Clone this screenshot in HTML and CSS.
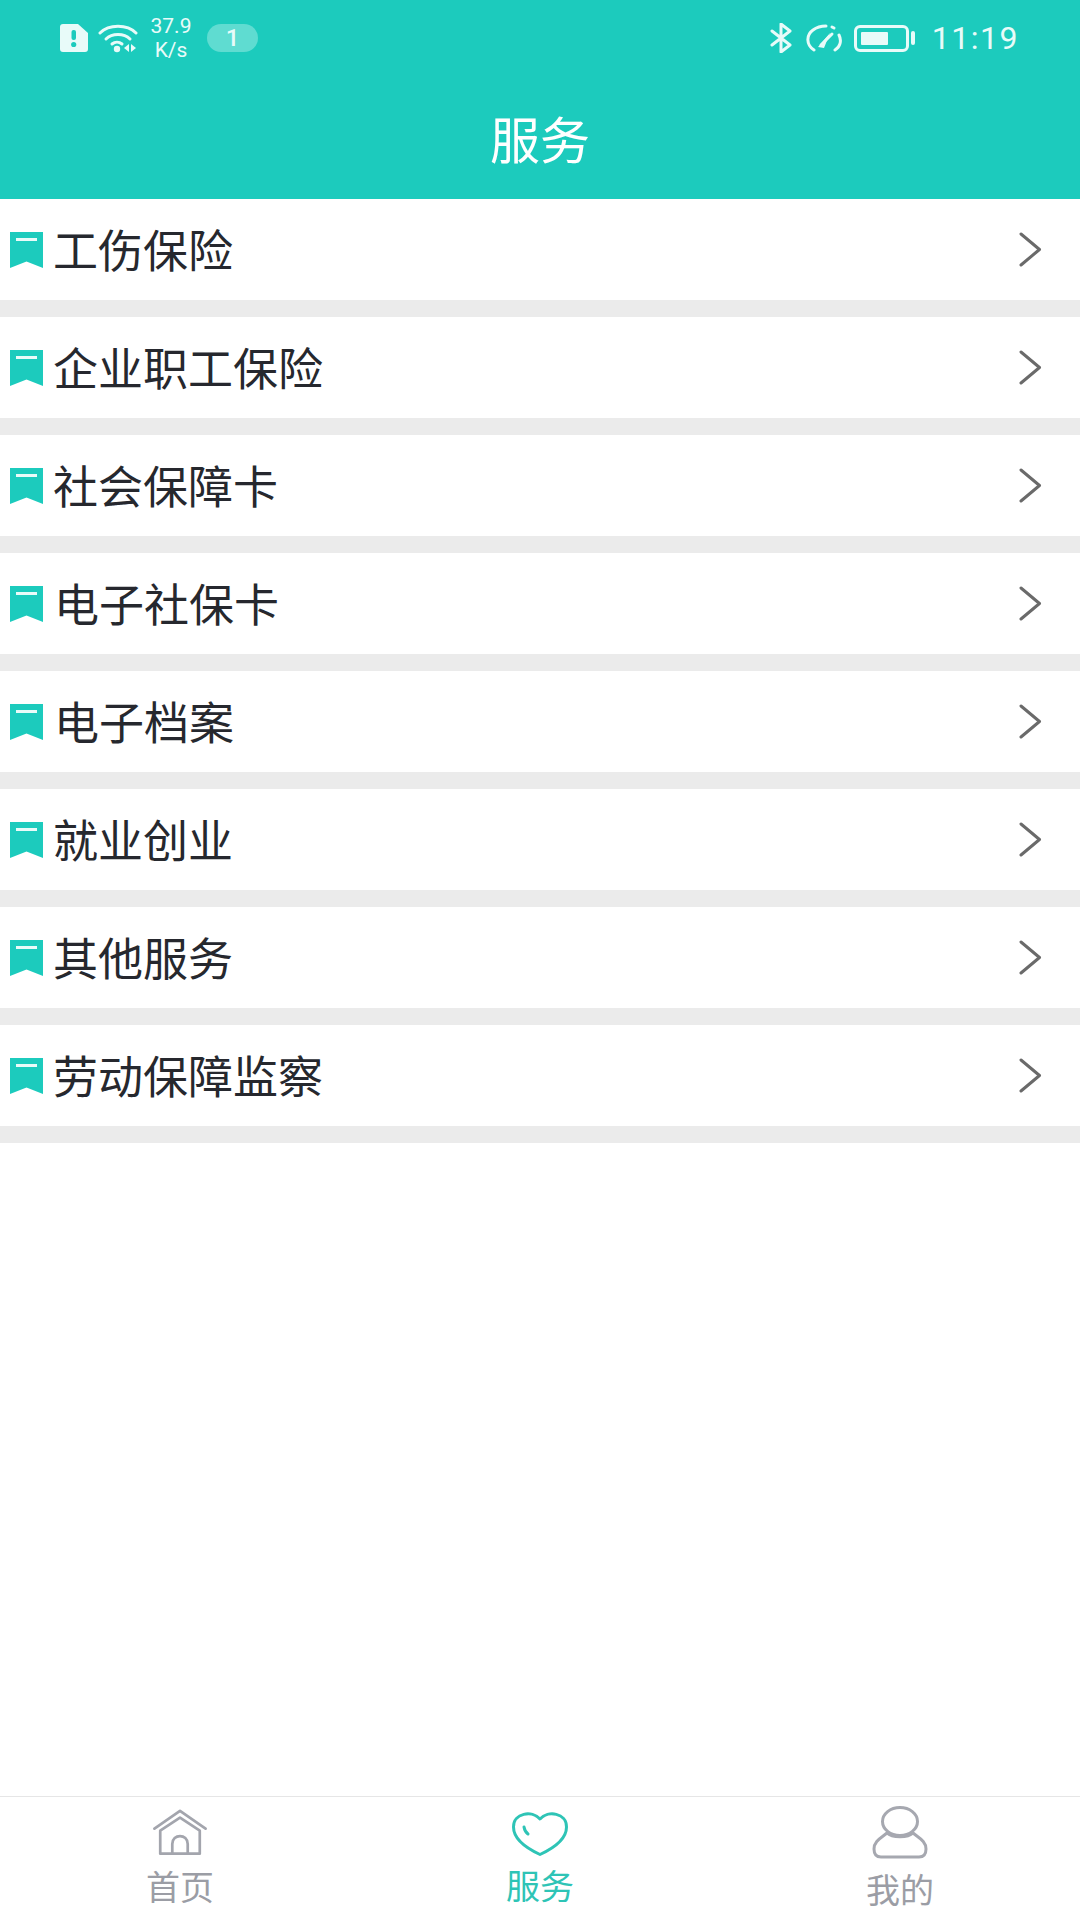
FILE: index.html
```html
<!DOCTYPE html>
<html>
<head>
<meta charset="utf-8">
<title>服务</title>
<link rel="stylesheet" href="styles.css">
</head>
<body>
<svg class="defs" width="0" height="0">
    <symbol id="flag" viewBox="0 0 33 36">
        <path d="M0 0H33V36L16.5 29.5L0 36Z" fill="#1ccbbd"/>
        <rect x="6" y="6" width="21" height="3" fill="#e9fbf9"/>
    </symbol>
    <symbol id="arrow" viewBox="0 0 23 35">
        <path d="M2 2L20.5 17.5L2 33" fill="none" stroke="#6a6a6a" stroke-width="3" stroke-linecap="round" stroke-linejoin="round"/>
    </symbol>
</svg>
<div class="page">
    <header class="head">
        <div class="status">
            <div class="status-left">
                <svg class="ic-sim" width="28" height="28" viewBox="0 0 28 28">
                    <path d="M3 0H18L28 9V25a3 3 0 0 1-3 3H3a3 3 0 0 1-3-3V3a3 3 0 0 1 3-3Z" fill="#e8fbf9"/>
                    <rect x="11.5" y="6" width="4.5" height="10" rx="2" fill="#1ccbbd"/>
                    <circle cx="13.7" cy="20.5" r="2.6" fill="#1ccbbd"/>
                </svg>
                <svg class="ic-wifi" width="40" height="30" viewBox="0 0 40 30">
                    <g fill="none" stroke="#e8fbf9" stroke-width="3" stroke-linecap="round">
                        <path d="M2 10C11 1 29 1 38 10"/>
                        <path d="M8 16C14 10 26 10 32 16"/>
                        <path d="M14 21C17 18.500 21 18.500 24 21"/>
                    </g>
                    <circle cx="19" cy="26" r="3.200" fill="#e8fbf9"/>
                    <path d="M31 21V29L26 25Z M33 21V29L38 25Z" fill="#e8fbf9"/>
                </svg>
                <div class="speed">37.9<br>K/s</div>
                <div class="badge">1</div>
            </div>
            <div class="status-right">
                <svg class="ic-bt" width="23" height="30" viewBox="0 0 23 30">
                    <path d="M2 8L20 22L11 29V1L20 8L2 22" fill="none" stroke="#e8fbf9" stroke-width="3" stroke-linecap="round" stroke-linejoin="round"/>
                </svg>
                <svg class="ic-gauge" width="36" height="28" viewBox="0 0 36 28">
                    <g fill="none" stroke="#e8fbf9" stroke-width="3" stroke-linecap="round">
                        <path d="M8 26C0 21 0 11 7 6C11 3 15 2 20 2"/>
                        <path d="M26 3L28 4"/>
                        <path d="M33 11C36 17 34 23 29 26"/>
                        <path d="M15 21L26 10"/>
                    </g>
                    <path d="M12 23L24 9L18 24Z" fill="#e8fbf9"/>
                </svg>
                <div class="battery"><div class="battery-fill"></div></div>
                <div class="battery-cap"></div>
                <div class="time">11:19</div>
            </div>
        </div>
        <h1>服务</h1>
    </header>
    <ul class="list">
        <li><svg class="flag"><use href="#flag"/></svg><span>工伤保险</span><svg class="arrow"><use href="#arrow"/></svg></li>
        <li><svg class="flag"><use href="#flag"/></svg><span>企业职工保险</span><svg class="arrow"><use href="#arrow"/></svg></li>
        <li><svg class="flag"><use href="#flag"/></svg><span>社会保障卡</span><svg class="arrow"><use href="#arrow"/></svg></li>
        <li><svg class="flag"><use href="#flag"/></svg><span class="shift">电子社保卡</span><svg class="arrow"><use href="#arrow"/></svg></li>
        <li><svg class="flag"><use href="#flag"/></svg><span class="shift">电子档案</span><svg class="arrow"><use href="#arrow"/></svg></li>
        <li><svg class="flag"><use href="#flag"/></svg><span>就业创业</span><svg class="arrow"><use href="#arrow"/></svg></li>
        <li><svg class="flag"><use href="#flag"/></svg><span>其他服务</span><svg class="arrow"><use href="#arrow"/></svg></li>
        <li><svg class="flag"><use href="#flag"/></svg><span>劳动保障监察</span><svg class="arrow"><use href="#arrow"/></svg></li>
    </ul>
    <nav class="tabs">
        <div class="tab tab-home">
            <svg width="54" height="47" viewBox="0 0 56 48">
                <g fill="none" stroke="#a3a5ad" stroke-width="2.800" stroke-linejoin="round" stroke-linecap="round">
                    <path d="M1.500 20L28 1.500L54.500 20"/>
                    <path d="M7.500 22L28 8.500L48.500 22V46H7.500Z"/>
                    <path d="M20 46V36C20 25 36 25 36 36V46"/>
                </g>
            </svg>
            <span>首页</span>
        </div>
        <div class="tab tab-service">
            <svg width="56" height="44" viewBox="0 0 56 44">
                <g fill="none" stroke="#2ec4b6" stroke-width="3" stroke-linecap="round" stroke-linejoin="round">
                    <path d="M28 42.500C14 36 1.500 27 1.500 15C1.500 1 20 -2 28 7C36 -2 54.500 1 54.500 15C54.500 27 42 36 28 42.500Z"/>
                    <path d="M12 15C12.500 18 14 20.500 16 22"/>
                </g>
            </svg>
            <span>服务</span>
        </div>
        <div class="tab tab-me">
            <svg width="56" height="53" viewBox="0 0 56 53">
                <g fill="none" stroke="#a6a8b0" stroke-width="3" stroke-linejoin="round">
                    <ellipse cx="28" cy="15.500" rx="17.500" ry="14"/>
                    <path d="M15 27C9 32 2 35 2 43C2 48 4 51 9 51H47C52 51 54 48 54 43C54 35 47 32 41 27C36 32 20 32 15 27Z"/>
                </g>
            </svg>
            <span>我的</span>
        </div>
    </nav>
</div>
</body>
</html>
```

FILE: styles.css
```css
body {
    margin: 0;
    font-family: "Noto Sans CJK SC", "Liberation Sans", sans-serif;
    background-color: #fff;
}
.defs {
    display: block;
    height: 0;
}
.page {
    width: 1080px;
    height: 1920px;
    display: flex;
    flex-direction: column;
}
.head {
    height: 199px;
    background-color: #1ccbbd;
    color: #fff;
}
.status {
    height: 76px;
    display: flex;
    justify-content: space-between;
    align-items: center;
    font-family: Roboto, "Liberation Sans", sans-serif;
    color: #e8fbf9;
}
.status-left {
    display: flex;
    align-items: center;
    padding-left: 60px;
}
.ic-wifi {
    margin-left: 10px;
}
.speed {
    width: 50px;
    margin-left: 8px;
    font-size: 21px;
    line-height: 24px;
    text-align: center;
}
.badge {
    width: 51px;
    height: 28px;
    margin-left: 11px;
    border-radius: 14px;
    background-color: #5fdcd1;
    font-size: 24px;
    font-weight: 500;
    line-height: 28px;
    text-align: center;
}
.status-right {
    display: flex;
    align-items: center;
    padding-right: 61px;
}
.ic-gauge {
    margin-left: 13px;
}
.battery {
    width: 55px;
    height: 27px;
    margin-left: 12px;
    padding: 4px;
    box-sizing: border-box;
    border: 3px solid #e8fbf9;
    border-radius: 6px;
}
.battery-fill {
    width: 27px;
    height: 100%;
    background-color: #e8fbf9;
    border-radius: 1px;
}
.battery-cap {
    width: 4px;
    height: 14px;
    margin-left: 2px;
    background-color: #e8fbf9;
    border-radius: 2px;
}
.time {
    margin-left: 17px;
    font-size: 32px;
    letter-spacing: 1.500px;
}
h1 {
    margin: 0;
    height: 123px;
    font-size: 50px;
    font-weight: 400;
    line-height: 122px;
    text-align: center;
}
.list {
    list-style: none;
    margin: 0;
    padding: 0;
    flex: 1;
}
.list li {
    height: 101px;
    display: flex;
    align-items: center;
    padding: 0 38px 0 10px;
    border-bottom: 17px solid #ebebeb;
    font-size: 45px;
    color: #26282e;
}
.list span {
    margin-left: -1px;
    padding-bottom: 3px;
}
.flag {
    width: 33px;
    height: 36px;
    margin-right: 11px;
    flex-shrink: 0;
}
.list .shift {
    margin-left: 0;
}
.arrow {
    width: 23px;
    height: 35px;
    margin-left: auto;
    margin-top: -1px;
}
.tabs {
    height: 123px;
    display: flex;
    border-top: 1px solid #e6e6e6;
    color: #9b9da5;
    font-size: 34px;
}
.tab {
    flex: 1;
    display: flex;
    flex-direction: column;
    align-items: center;
}
.tab svg {
    display: block;
}
.tab span {
    line-height: 40px;
}
.tab-home {
    padding-top: 12px;
}
.tab-home span {
    margin-top: 10px;
}
.tab-service {
    padding-top: 15px;
    color: #2ec4b6;
}
.tab-service span {
    margin-top: 9px;
}
.tab-me {
    padding-top: 9px;
}
.tab-me span {
    margin-top: 10px;
}
```
